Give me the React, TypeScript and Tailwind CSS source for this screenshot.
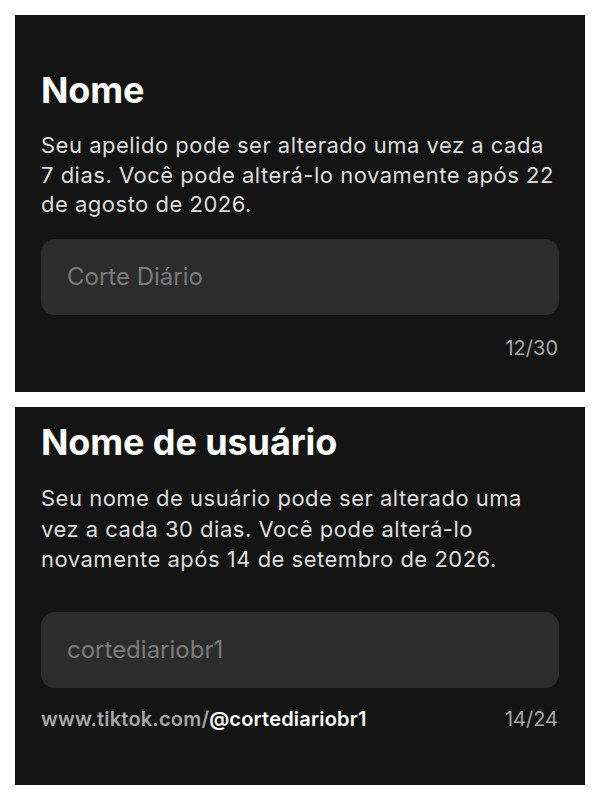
export default function App() {
  return (
    <div
      className="w-[600px] h-[800px] bg-white flex flex-col gap-[15px] p-[15px] overflow-hidden"
      style={{ fontFamily: 'Inter, "Noto Sans", sans-serif' }}
    >
      {/* Nome */}
      <section className="h-[377px] bg-[#141414] px-[26px] pt-[53px] flex flex-col">
        <h2 className="text-[36px] leading-[44px] font-bold text-white tracking-[-0.1px]">Nome</h2>
        <p className="mt-[19px] text-[22px] leading-[29.5px] text-[#dedede] tracking-[0.5px]">
          Seu apelido pode ser alterado uma vez a cada 7 dias. Você pode alterá-lo novamente após 22 de agosto de 2026.
        </p>
        <div className="mt-[19px] h-[76px] rounded-[14px] bg-[#2c2c2c] flex items-center px-[26px]">
          <span className="text-[24px] text-[#7b7b7b]">Corte Diário</span>
        </div>
        <div className="mt-[21px] flex justify-end pr-[1px]">
          <span className="text-[20px] leading-[24px] text-[#a6a6a6]">12/30</span>
        </div>
      </section>

      {/* Nome de usuário */}
      <section className="h-[378px] bg-[#141414] px-[26px] pt-[13px] flex flex-col">
        <h2 className="text-[36px] leading-[44px] font-bold text-white tracking-[-0.1px]">Nome de usuário</h2>
        <p className="mt-[19px] text-[22px] leading-[30.5px] text-[#dedede] tracking-[0.5px]">
          Seu nome de usuário pode ser alterado uma vez a cada 30 dias. Você pode alterá-lo novamente após 14 de setembro de 2026.
        </p>
        <div className="mt-[37px] h-[76px] rounded-[14px] bg-[#2c2c2c] flex items-center px-[26px]">
          <span className="text-[24px] text-[#7b7b7b]">cortediariobr1</span>
        </div>
        <div className="mt-[19px] flex justify-between items-center pr-[1px]">
          <span className="text-[20px] leading-[24px] font-semibold tracking-[0.2px]">
            <span className="text-[#a6a6a6]">www.tiktok.com/</span>
            <span className="text-white">@cortediariobr1</span>
          </span>
          <span className="text-[20px] leading-[24px] text-[#a6a6a6]">14/24</span>
        </div>
      </section>
    </div>
  );
}
